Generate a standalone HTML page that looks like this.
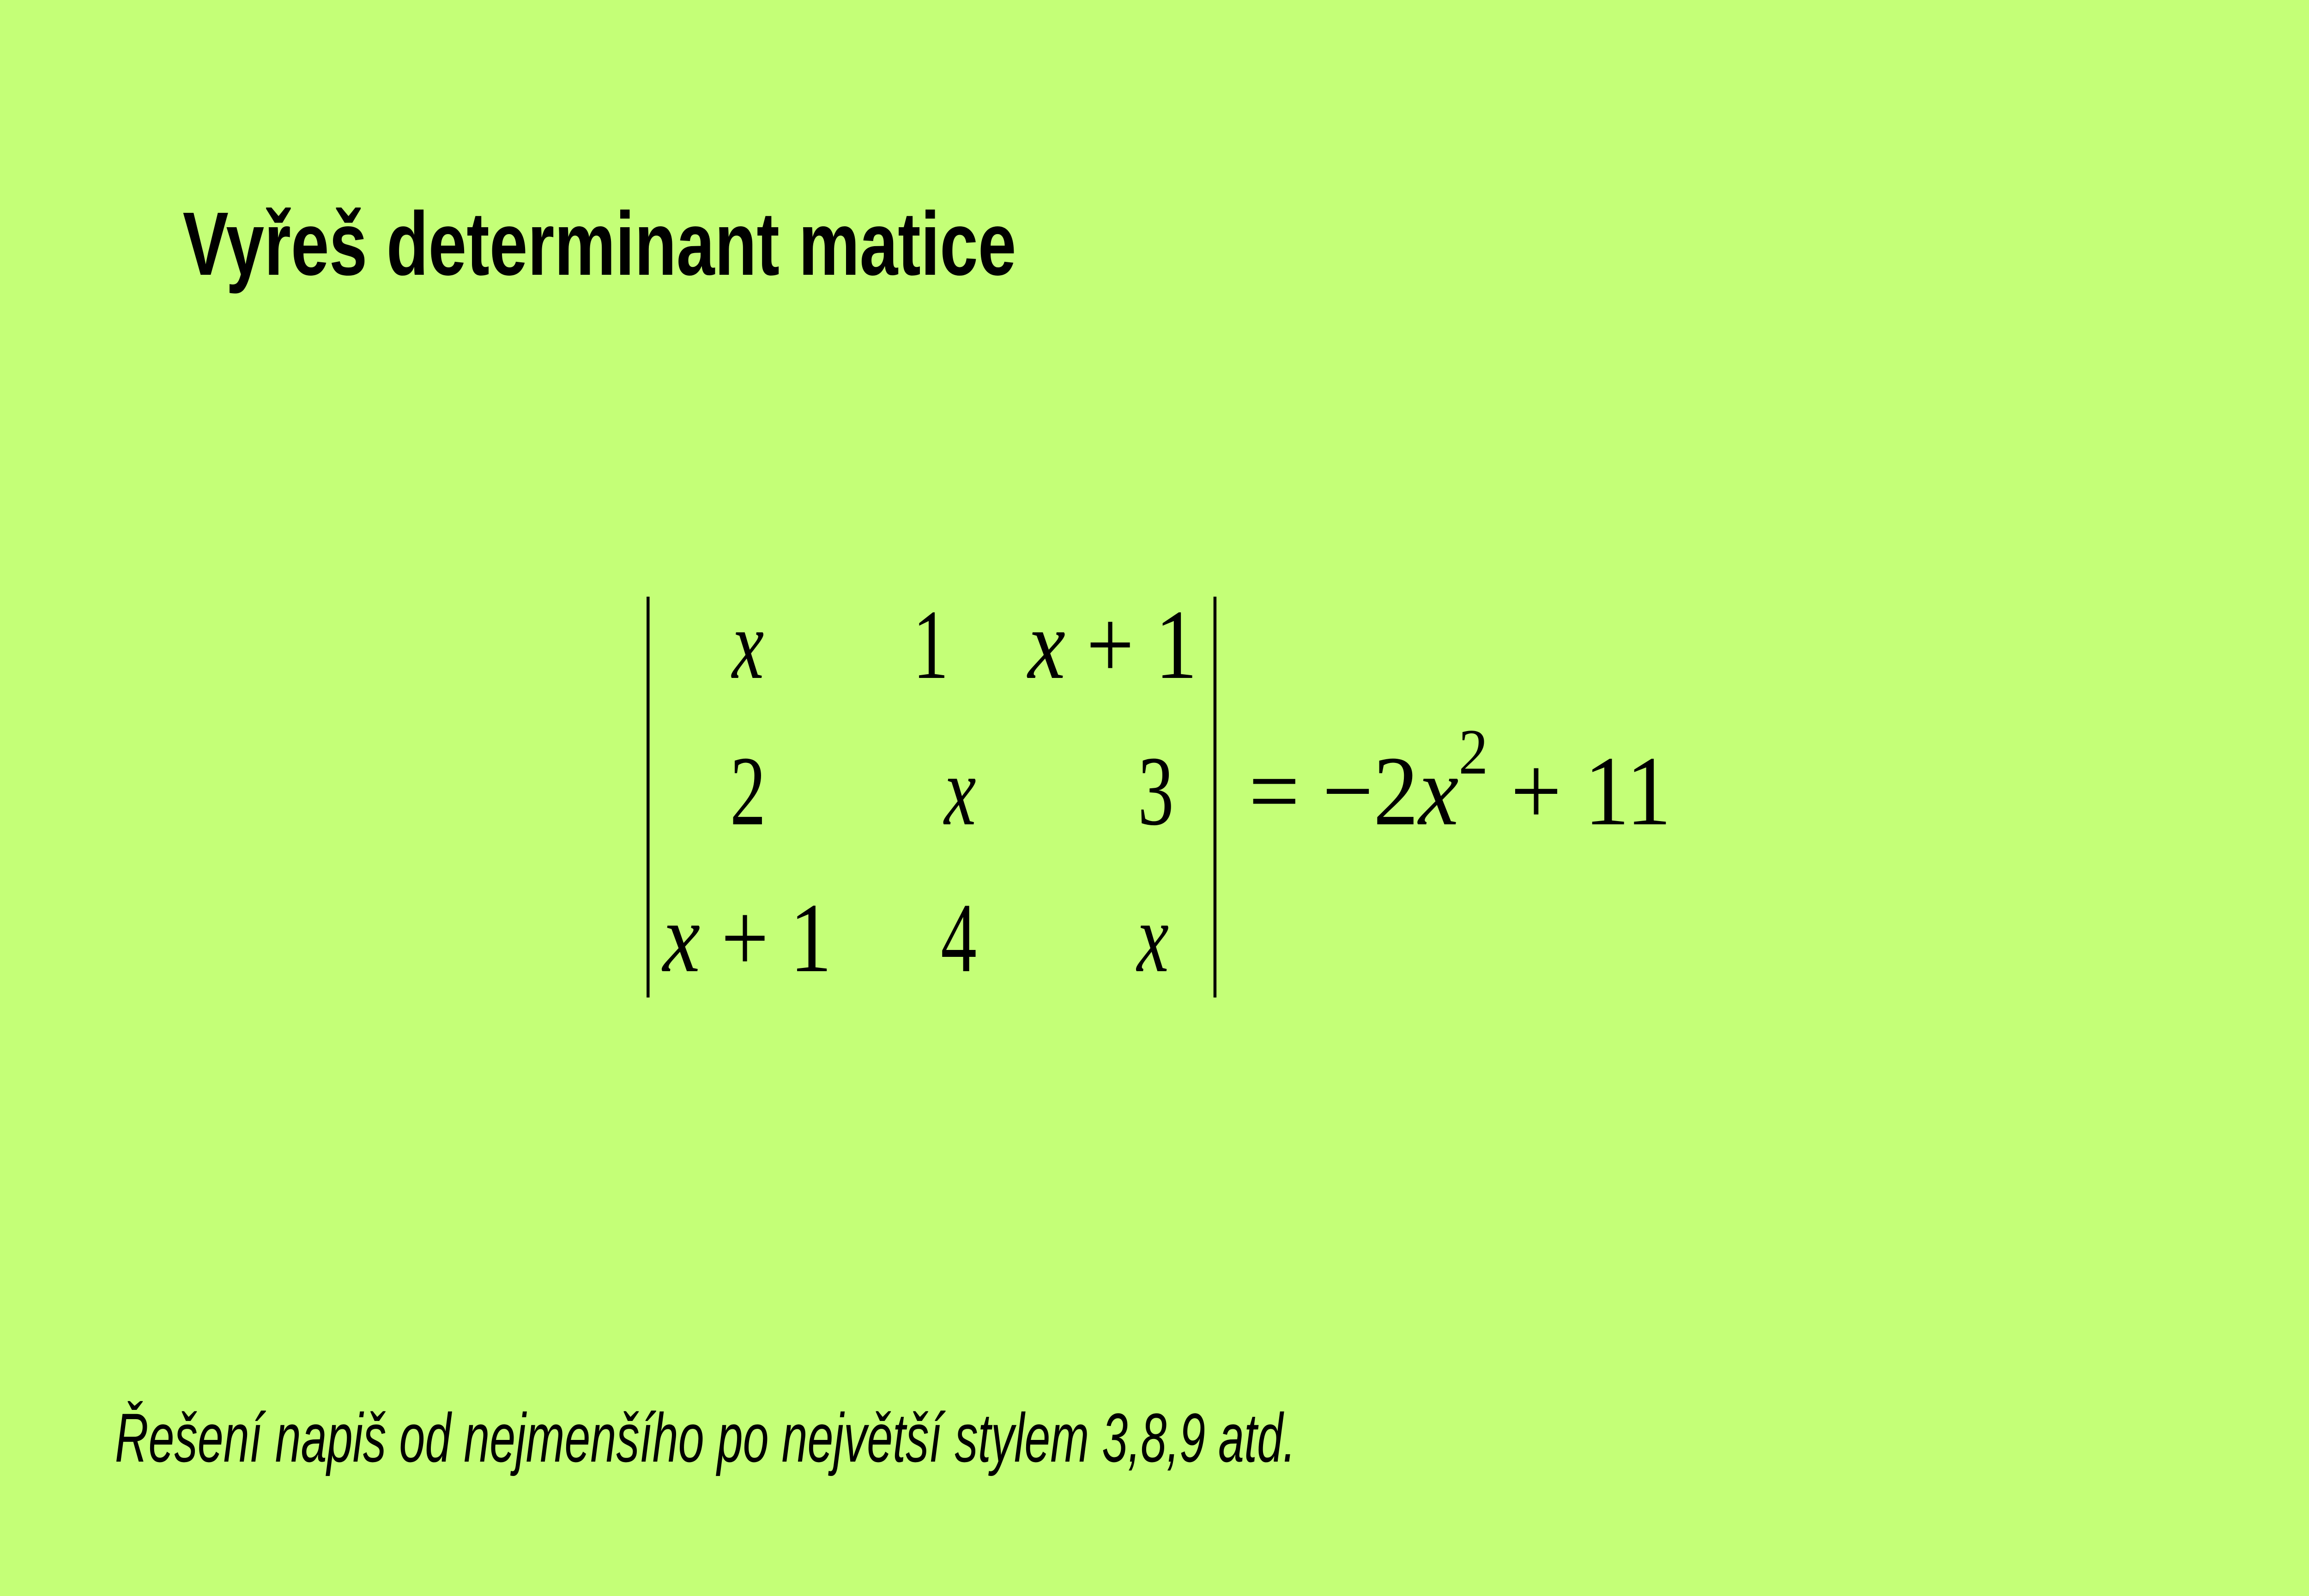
<!DOCTYPE html>
<html><head><meta charset="utf-8"><style>
html,body{margin:0;padding:0;background:#c4ff77;overflow:hidden;width:100%;height:100%;}
svg{display:block;width:100vw;height:100vh;}
</style></head><body>
<svg viewBox="0 0 6912 3456" preserveAspectRatio="none" xmlns="http://www.w3.org/2000/svg">
<rect width="6912" height="3456" fill="#c4ff77"/>
<text x="547" y="595" font-family="Liberation Sans, sans-serif" font-weight="bold" font-size="195" textLength="2495" lengthAdjust="spacingAndGlyphs" fill="#000">Vyřeš determinant matice</text>
<g font-family="Liberation Serif, serif" font-size="215" fill="#000">
<line x1="1940" y1="1292" x2="1940" y2="2160" stroke="#000" stroke-width="9"/>
<line x1="3637" y1="1292" x2="3637" y2="2160" stroke="#000" stroke-width="9"/>
<text x="2239" y="1468" text-anchor="middle" font-style="italic">x</text>
<text x="2786" y="1468" text-anchor="middle">1</text>
<text x="3077" y="1468" textLength="507" lengthAdjust="spacingAndGlyphs"><tspan font-style="italic">x</tspan> + 1</text>
<text x="2239" y="1785" text-anchor="middle">2</text>
<text x="2874" y="1785" text-anchor="middle" font-style="italic">x</text>
<text x="3460" y="1785" text-anchor="middle">3</text>
<text x="1984" y="2103" textLength="506" lengthAdjust="spacingAndGlyphs"><tspan font-style="italic">x</tspan> + 1</text>
<text x="2870" y="2103" text-anchor="middle">4</text>
<text x="3451" y="2103" text-anchor="middle" font-style="italic">x</text>
<text x="3738" y="1785" textLength="1265" lengthAdjust="spacingAndGlyphs">= −2<tspan font-style="italic">x</tspan><tspan font-size="140" dy="-110">2</tspan><tspan dy="110"> + 11</tspan></text>
</g>
<text x="344" y="3165" font-family="Liberation Sans, sans-serif" font-style="italic" font-size="150" textLength="3535" lengthAdjust="spacingAndGlyphs" fill="#000">Řešení napiš od nejmenšího po největší stylem 3,8,9 atd.</text>
</svg>
</body></html>
